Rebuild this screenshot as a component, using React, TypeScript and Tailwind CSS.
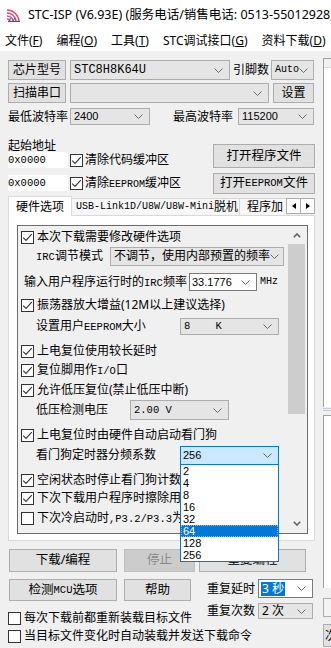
import React from "react";

const mono = "font-['Liberation_Mono',monospace]";
const arial = "font-['Liberation_Sans',Arial,sans-serif]";

function Chevron() {
  return (
    <svg width="9" height="5" viewBox="0 0 9 5" className="shrink-0">
      <polyline points="0.5,0.5 4.5,4.5 8.5,0.5" fill="none" stroke="#6a6a6a" strokeWidth="1" />
    </svg>
  );
}

function Check({ checked = true }: { checked?: boolean }) {
  return (
    <span className="w-[13px] h-[13px] border border-[#333] bg-white flex items-center justify-center shrink-0">
      {checked && (
        <svg width="11" height="9" viewBox="0 0 11 9">
          <polyline points="1.2,4.6 4,7.4 9.8,1.2" fill="none" stroke="#333" strokeWidth="1.1" />
        </svg>
      )}
    </span>
  );
}

function Btn({ className = "", children, disabled }: { className?: string; children: React.ReactNode; disabled?: boolean }) {
  return (
    <div
      className={`flex items-center justify-center border shrink-0 whitespace-nowrap ${
        disabled ? "bg-[#cccccc] border-[#bfbfbf] text-[#8a8a8a]" : "bg-[#e1e1e1] border-[#adadad]"
      } ${className}`}
    >
      {children}
    </div>
  );
}

function Combo({ className = "", children }: { className?: string; children?: React.ReactNode }) {
  return (
    <div className={`flex items-center justify-between border border-[#adadad] bg-[#e5e5e5] pl-[3px] pr-[6px] shrink-0 ${className}`}>
      <span className="whitespace-nowrap">{children}</span>
      <Chevron />
    </div>
  );
}

function AppIcon() {
  return (
    <svg width="15" height="13" viewBox="0 0 15 13" className="shrink-0">
      <path d="M1 1 A12 12 0 0 1 13 12" fill="none" stroke="#e8457a" strokeWidth="1.4" />
      <path d="M1 4 A9 9 0 0 1 10 12" fill="none" stroke="#e8457a" strokeWidth="1.4" />
      <path d="M1 7 A6 6 0 0 1 7 12" fill="none" stroke="#e8457a" strokeWidth="1.4" />
      <path d="M1 10 A3 3 0 0 1 4 12" fill="none" stroke="#e8457a" strokeWidth="1.4" />
      <path d="M2 12.5 L14 12.5" stroke="#2a4ed8" strokeWidth="1.2" />
      <path d="M3 12 L5 9 M7 12 L9 9" stroke="#2a4ed8" strokeWidth="1" />
    </svg>
  );
}

function CheckRow({ className = "", checked = true, clip, children }: { className?: string; checked?: boolean; clip?: boolean; children: React.ReactNode }) {
  return (
    <div className={`h-[18px] flex items-center pl-[3px] whitespace-nowrap ${className}`}>
      <Check checked={checked} />
      <span className={`ml-[3px] leading-[18px] ${clip ? "w-[143px] overflow-hidden" : ""}`}>{children}</span>
    </div>
  );
}

export default function App() {
  return (
    <div className="relative w-[331px] h-[648px] overflow-hidden bg-[#f0f0f0] text-[12px] text-black leading-none font-['Noto_Sans','Noto_Sans_CJK_SC',sans-serif]">
      {/* title bar */}
      <div className="h-[30px] bg-white flex items-center pl-[6px] whitespace-nowrap">
        <AppIcon />
        <span className="ml-[7px] text-[12.5px]">STC-ISP (V6.93E) (服务电话/销售电话: 0513-55012928)</span>
      </div>
      {/* menu bar */}
      <div className="h-[21px] bg-white flex items-center pl-[5px] gap-[14px] whitespace-nowrap">
        <span>文件(<u>F</u>)</span>
        <span>编程(<u>O</u>)</span>
        <span>工具(<u>T</u>)</span>
        <span>STC调试接口(<u>G</u>)</span>
        <span>资料下载(<u>D</u>)</span>
      </div>

      <div className="flex">
        {/* left column */}
        <div className="w-[323px] shrink-0 pl-[8px] pt-[9px]">
          <div className="h-[20px] flex items-center">
            <Btn className="w-[58px] h-[20px]">芯片型号</Btn>
            <Combo className={`ml-[4px] w-[160px] h-[20px] ${mono}`}>STC8H8K64U</Combo>
            <span className="ml-[3px] w-[38px]">引脚数</span>
            <Combo className={`w-[43px] h-[20px] text-[10px] pl-[2px] pr-[4px] ${mono}`}>Auto</Combo>
          </div>
          <div className="h-[20px] mt-[3px] flex items-center">
            <Btn className="w-[58px] h-[20px]">扫描串口</Btn>
            <Combo className="ml-[4px] w-[199px] h-[20px]" />
            <Btn className="ml-[4px] w-[41px] h-[20px]">设置</Btn>
          </div>
          <div className="h-[17px] mt-[5px] flex items-center">
            <span className="w-[62px]">最低波特率</span>
            <Combo className={`w-[80px] h-[17px] text-[11px] pl-[1px] ${arial}`}>2400</Combo>
            <span className="ml-[23px] w-[65px]">最高波特率</span>
            <Combo className={`w-[76px] h-[17px] text-[11px] pl-[2px] ${arial}`}>115200</Combo>
          </div>

          {/* address + file buttons */}
          <div className="mt-[15px] flex">
            <div className="w-[205px]">
              <div className="h-[12px] flex items-center">起始地址</div>
              <div className="h-[16px] flex items-center">
                <div className={`w-[60px] h-[16px] bg-white flex items-center text-[10.5px] ${mono}`}>0x0000</div>
                <span className="ml-[2px]"><Check /></span>
                <span className="ml-[2px] whitespace-nowrap">清除代码缓冲区</span>
              </div>
              <div className="h-[16px] mt-[7px] flex items-center">
                <div className={`w-[60px] h-[16px] bg-white flex items-center text-[10.5px] ${mono}`}>0x0000</div>
                <span className="ml-[2px]"><Check /></span>
                <span className="ml-[2px] whitespace-nowrap">
                  清除<span className={`text-[10px] ${mono}`}>EEPROM</span>缓冲区
                </span>
              </div>
            </div>
            <div className="flex flex-col">
              <Btn className="mt-[4px] w-[102px] h-[24px] text-[12.5px]">打开程序文件</Btn>
              <Btn className="mt-[5px] w-[102px] h-[21px] text-[12.5px]">
                打开<span className={`text-[10.5px] ${mono}`}>EEPROM</span>文件
              </Btn>
            </div>
          </div>

          {/* tabs */}
          <div className="mt-[2px] w-[307px] h-[19px] flex items-end whitespace-nowrap">
            <div className="relative z-10 -mb-px w-[64px] h-[20px] bg-white border border-b-0 border-[#d9d9d9] flex items-center justify-center">
              硬件选项
            </div>
            <div className="w-[168px] h-[17px] border border-l-0 border-b-0 border-[#d9d9d9] bg-[#f7f7f7] flex items-center pl-[4px]">
              <span className={`text-[10px] ${mono}`}>USB-Link1D/U8W/U8W-Mini</span>脱机
            </div>
            <div className="w-[46px] h-[17px] border-t border-[#d9d9d9] bg-[#f7f7f7] flex items-center pl-[7px] overflow-hidden">
              <span className="w-[37px] overflow-hidden leading-[16px]">程序加</span>
            </div>
            <div className="h-[16px] mb-[1px] flex">
              <div className="w-[15px] h-[16px] border border-[#adadad] bg-[#fbfbfb] flex items-center justify-center">
                <svg width="4" height="6" viewBox="0 0 4 6"><polygon points="4,0 0,3 4,6" fill="#000" /></svg>
              </div>
              <div className="w-[14px] h-[16px] border border-l-0 border-[#adadad] bg-[#fbfbfb] flex items-center justify-center">
                <svg width="4" height="6" viewBox="0 0 4 6"><polygon points="0,0 4,3 0,6" fill="#000" /></svg>
              </div>
            </div>
          </div>

          {/* tab panel */}
          <div className="w-[307px] h-[326px] bg-white border border-[#d9d9d9] pl-[8px] pt-[9px] pr-[6px]">
            <div className="h-[309px] border border-[#6d6d6d] bg-[#f0f0f0] flex">
              <div className="flex-1">
                <CheckRow className="mt-[2px]">本次下载需要修改硬件选项</CheckRow>
                <div className="h-[20px] flex items-center whitespace-nowrap">
                  <span className="ml-[18px] w-[74px]">
                    <span className={`text-[10.5px] ${mono}`}>IRC</span>调节模式
                  </span>
                  <Combo className="w-[174px] h-[19px]">不调节，使用内部预置的频率</Combo>
                </div>
                <div className="h-[20px] mt-[6px] flex items-center whitespace-nowrap">
                  <span className="ml-[6px] w-[165px]">
                    输入用户程序运行时的<span className={`text-[10.5px] ${mono}`}>IRC</span>频率
                  </span>
                  <div className={`w-[68px] h-[18px] bg-white border border-[#7a7a7a] flex items-center justify-between pl-[2px] pr-[6px] text-[11px] ${arial}`}>
                    <span>33.1776</span>
                    <Chevron />
                  </div>
                  <span className={`ml-[3px] text-[10px] ${mono}`}>MHz</span>
                </div>
                <CheckRow className="mt-[4px]">振荡器放大增益(12M以上建议选择)</CheckRow>
                <div className="h-[18px] mt-[3px] flex items-center whitespace-nowrap">
                  <span className="ml-[18px] w-[144px]">
                    设置用户<span className={`text-[10.5px] ${mono}`}>EEPROM</span>大小
                  </span>
                  <Combo className={`w-[99px] h-[17px] text-[10.5px] ${mono}`}>8&nbsp;&nbsp;&nbsp;&nbsp;K</Combo>
                </div>
                <CheckRow className="mt-[7px]">上电复位使用较长延时</CheckRow>
                <CheckRow className="mt-[1px]">
                  复位脚用作<span className={`text-[10.5px] ${mono}`}>I/O</span>口
                </CheckRow>
                <CheckRow className="mt-[2px]">允许低压复位(禁止低压中断)</CheckRow>
                <div className="h-[20px] mt-[1px] flex items-center whitespace-nowrap">
                  <span className="ml-[18px] w-[94px]">低压检测电压</span>
                  <Combo className={`w-[99px] h-[20px] text-[10.5px] pl-[2px] ${mono}`}>2.00 V</Combo>
                </div>
                <CheckRow className="mt-[6px]">上电复位时由硬件自动启动看门狗</CheckRow>
                <div className="h-[20px] mt-[1px] flex items-center whitespace-nowrap">
                  <span className="ml-[18px] w-[144px]">看门狗定时器分频系数</span>
                  <div className={`w-[99px] h-[19px] bg-[#cce8ff] border border-[#0078d7] flex items-center justify-between pl-[2px] pr-[6px] text-[11px] ${arial}`}>
                    <span>256</span>
                    <Chevron />
                  </div>
                </div>
                <CheckRow className="mt-[6px]" clip>空闲状态时停止看门狗计数</CheckRow>
                <CheckRow clip>下次下载用户程序时擦除用</CheckRow>
                <CheckRow className="mt-[2px]" checked={false} clip>
                  下次冷启动时<span className={`text-[10.5px] ${mono}`}>,P3.2/P3.3</span>为
                </CheckRow>
              </div>
              {/* scrollbar */}
              <div className="w-[17px] mr-[2px] my-px flex flex-col bg-[#f0f0f0]">
                <div className="h-[17px] flex items-center justify-center">
                  <svg width="8" height="5" viewBox="0 0 8 5"><polyline points="0.8,4.2 4,1 7.2,4.2" fill="none" stroke="#606060" strokeWidth="1.6" /></svg>
                </div>
                <div className="h-[170px] bg-[#cdcdcd]" />
                <div className="flex-1" />
                <div className="h-[17px] flex items-center justify-center">
                  <svg width="8" height="5" viewBox="0 0 8 5"><polyline points="0.8,0.8 4,4 7.2,0.8" fill="none" stroke="#606060" strokeWidth="1.6" /></svg>
                </div>
              </div>
            </div>
          </div>

          {/* bottom buttons */}
          <div className="mt-[8px] flex items-center">
            <Btn className="ml-[1px] w-[108px] h-[23px] text-[12.5px]">下载/编程</Btn>
            <Btn disabled className="ml-[7px] w-[71px] h-[23px] text-[12.5px]">停止</Btn>
            <Btn className="ml-[4px] w-[107px] h-[23px] text-[12.5px]">重复编程</Btn>
          </div>
          <div className="mt-[7px] flex">
            <div className="w-[199px]">
              <div className="h-[22px] flex">
                <Btn className="ml-[1px] w-[108px] h-[22px] text-[12.5px]">
                  检测<span className={`text-[10.5px] ${mono}`}>MCU</span>选项
                </Btn>
                <Btn className="ml-[7px] w-[67px] h-[22px] text-[12.5px]">帮助</Btn>
              </div>
              <div className="mt-[8px] h-[18px] flex items-center whitespace-nowrap">
                <span className="w-[13px] h-[13px] border border-[#333] bg-white shrink-0" />
                <span className="ml-[3px]">每次下载前都重新装载目标文件</span>
              </div>
            </div>
            <div className="flex flex-col">
              <div className="h-[19px] flex items-center whitespace-nowrap">
                <span className="w-[51px]">重复延时</span>
                <div className="w-[55px] h-[19px] bg-white border border-[#7a7a7a] flex items-center justify-between pl-[2px] pr-[6px]">
                  <span className="bg-[#0078d7] text-white h-[14px] flex items-center px-[1px]">3 秒</span>
                  <Chevron />
                </div>
              </div>
              <div className="mt-[5px] h-[16px] flex items-center whitespace-nowrap">
                <span className="w-[51px]">重复次数</span>
                <Combo className="w-[55px] h-[16px] pl-[2px]">2 次</Combo>
              </div>
            </div>
          </div>
          <div className="h-[18px] flex items-center whitespace-nowrap">
            <span className="w-[13px] h-[13px] border border-[#333] bg-white shrink-0" />
            <span className="ml-[3px]">当目标文件变化时自动装载并发送下载命令</span>
          </div>
        </div>

        {/* right panel (clipped) */}
        <div className="flex-1 flex flex-col pt-[7px]">
          <div className="h-[349px] border-l border-t border-[#a0a0a0] bg-white">
            <div className="h-[9px] bg-[#f0f0f0] border-b border-[#d9d9d9]" />
          </div>
          <div className="h-[3px] mt-px border-t border-b border-[#c4ccd8]" />
          <div className="mt-[4px] h-[173px] border-l border-t border-[#a0a0a0] bg-white" />
          <div className="mt-[10px] h-[19px] border border-[#adadad] bg-[#f3f3f3]" />
          <div className="mt-[7px] h-[23px] border border-[#adadad] bg-[#e1e1e1] flex items-center pl-[1px] overflow-hidden whitespace-nowrap">
            次
          </div>
        </div>
      </div>

      {/* open dropdown list */}
      <div className={`absolute left-[180px] top-[464px] w-[99px] bg-white border border-[#0078d7] text-[11px] ${arial}`}>
        {["2", "4", "8", "16", "32", "64", "128", "256"].map((v) => (
          <div
            key={v}
            className={`h-[12px] flex items-center pl-[2px] ${v === "64" ? "bg-[#0078d7] text-white outline-1 outline-dotted outline-[#7fbfff] -outline-offset-1" : ""}`}
          >
            {v}
          </div>
        ))}
      </div>
    </div>
  );
}
